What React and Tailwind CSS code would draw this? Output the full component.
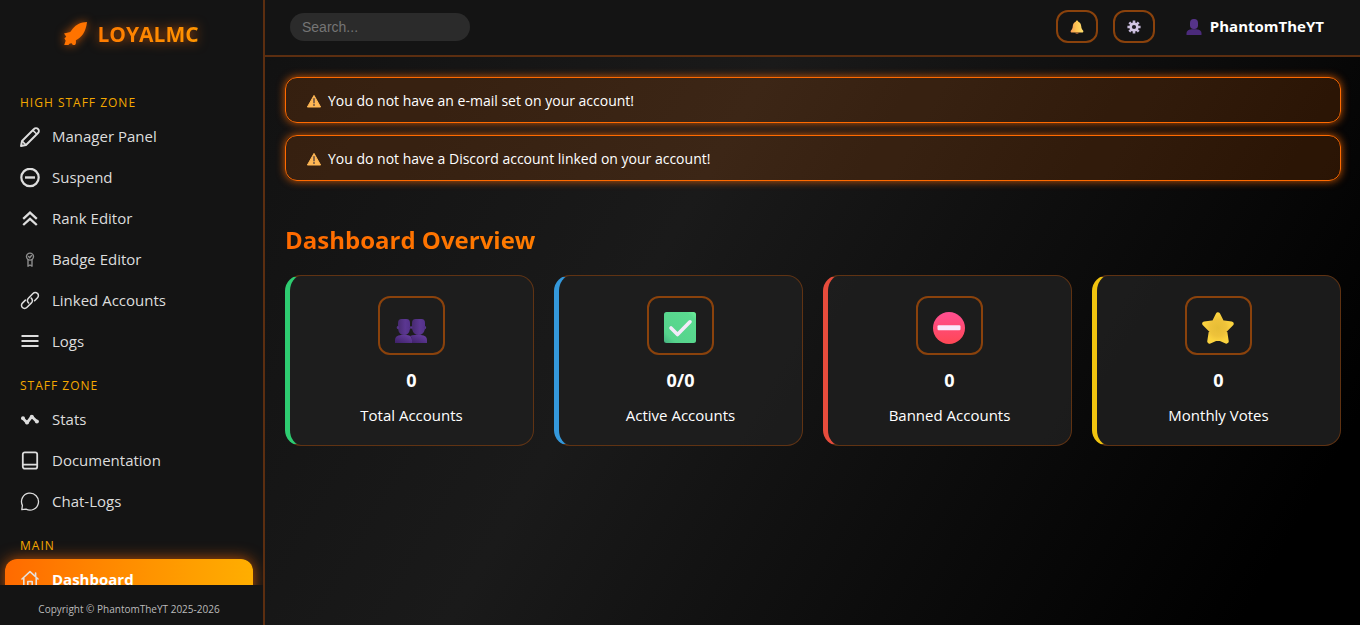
import React from "react";

const line = {
  viewBox: "0 0 20 20",
  fill: "none",
  stroke: "currentColor",
  strokeLinecap: "round",
  strokeLinejoin: "round",
  className: "size-5 shrink-0",
  "aria-hidden": true,
};

const PencilIcon = () => (
  <svg {...line} strokeWidth="1.9">
    <path d="M1 19l1-5L14 2a2.700 2.700 0 0 1 4 0a2.700 2.700 0 0 1 0 4L6 18z" />
    <path d="M13.200 3.600l3.200 3.200M2.600 14.600l2.800 2.800" strokeWidth="1.500" />
  </svg>
);
const SuspendIcon = () => (
  <svg {...line} strokeWidth="2.2">
    <circle cx="10" cy="9.500" r="8.700" />
    <path d="M5 9.500h10" strokeLinecap="butt" strokeWidth="2.400" />
  </svg>
);
const RankIcon = () => (
  <svg {...line} strokeWidth="2.3" strokeLinecap="butt" strokeLinejoin="miter">
    <path d="M3.200 9.800L10 3.600l6.800 6.200M3.200 16L10 9.800l6.800 6.200" />
  </svg>
);
const BadgeIcon = () => (
  <svg {...line} strokeWidth="1.400" opacity="0.6">
    <circle cx="10" cy="6.600" r="3.500" />
    <path d="M8.600 6.600l1.100 1.100 1.800-2.200M8 9.800v6.400l2-1.200 2 1.200V9.800" />
  </svg>
);
const LinkIcon = () => (
  <svg {...line} strokeWidth="1.5">
    <path d="M8.600 11.900C6.900 10.300 7.100 8.500 8.600 6.900L13 2.400a3.100 3.100 0 0 1 4.500 0a3.100 3.100 0 0 1 0 4.400l-2.900 3" />
    <path d="M11.200 7.100c1.700 1.600 1.600 3.500 0 5L6.800 16.500a3.100 3.100 0 0 1-4.400 0a3.100 3.100 0 0 1 0-4.400l3-3" />
  </svg>
);
const LogsIcon = () => (
  <svg {...line} strokeWidth="2" strokeLinecap="butt">
    <path d="M1.500 4h17M1.500 9h17M1.500 14h17" />
  </svg>
);
const StatsIcon = () => (
  <svg {...line} strokeWidth="2.8">
    <path d="M3 8.400L7 12.800 11.700 6.600 16.800 11.600" />
    <g fill="currentColor" stroke="none">
      <circle cx="3" cy="8.200" r="2" />
      <circle cx="7" cy="12.600" r="2" />
      <circle cx="11.800" cy="6.800" r="2" />
      <circle cx="16.900" cy="11.400" r="2" />
    </g>
  </svg>
);
const BookIcon = () => (
  <svg {...line} strokeWidth="1.8">
    <rect x="2.800" y="1.300" width="14.400" height="16.400" rx="2" />
    <path d="M3 13.700h14" />
  </svg>
);
const ChatIcon = () => (
  <svg {...line} strokeWidth="1.3">
    <path d="M1.800 17.600l.6-4.200A8.500 8.500 0 1 1 6 17.100z" />
  </svg>
);
const HomeIcon = () => (
  <svg {...line} strokeWidth="1.6" stroke="#e6e0da">
    <path d="M2 9L10 1.700l8 7.300M3.800 8v9.500h4V11.500h4.400v6h4V8M15.600 6.300V3" />
  </svg>
);

const RocketIcon = () => (
  <svg
    viewBox="0 0 22 22"
    fill="#ff7300"
    className="size-[23px] shrink-0 drop-shadow-[0_0_5px_rgba(255,106,0,0.7)]"
    aria-hidden="true"
  >
    <path d="M22 0C16 .2 12 2 8.300 6.500L6 9.500 0 11 2.200 14.200 .4 15.600 1.600 18 .2 22H4.200L5.600 20.600 7.400 20.400 8.400 22H10.600L11.400 20.400V17.500C17 14.500 21 9.500 22 0z" />
  </svg>
);

const WarningEmoji = () => (
  <svg viewBox="0 0 16 16" className="size-4 shrink-0" aria-hidden="true">
    <path d="M8 2.400L14.600 14H1.400z" fill="#ffb754" stroke="#ffb754" strokeWidth="1" strokeLinejoin="round" />
    <path d="M8 5.800v4" stroke="#5f4a45" strokeWidth="1.500" strokeLinecap="round" />
    <circle cx="8" cy="12" r=".9" fill="#5f4a45" />
  </svg>
);
const BellEmoji = () => (
  <svg viewBox="0 0 14 14" className="size-3.5" aria-hidden="true">
    <defs>
      <linearGradient id="bell" x1="0" x2="1">
        <stop offset="0" stopColor="#f79a55" />
        <stop offset=".45" stopColor="#ffc552" />
        <stop offset="1" stopColor="#ffdf70" />
      </linearGradient>
    </defs>
    <path d="M7 .6a1.400 1.400 0 0 1 1.300 1.200C10.300 2.600 11 4.200 11.200 6c.2 2.200.6 3.200 1.800 4.400.6.700.4 2-.4 2H1.400c-.8 0-1-1.300-.4-2C2.200 9.200 2.600 8.200 2.800 6c.2-1.800.9-3.400 2.900-4.200A1.400 1.400 0 0 1 7 .6z" fill="url(#bell)" />
    <path d="M5.200 12.400h3.600a1.800 1.400 0 0 1-3.600 0z" fill="#c8743a" />
  </svg>
);
const GearEmoji = () => (
  <svg viewBox="0 0 14 14" className="size-3.5" aria-hidden="true">
    <g stroke="#c5b8d9" strokeWidth="2.600">
      <path d="M7 .4v13.200M.4 7h13.200M2.300 2.300l9.400 9.400M11.700 2.300l-9.400 9.400" />
    </g>
    <circle cx="7" cy="7" r="4.600" fill="#d4c8e4" />
    <circle cx="7" cy="7" r="2.100" fill="#1d1a22" />
  </svg>
);
const PersonEmoji = () => (
  <svg viewBox="0 0 16 16" className="size-4 shrink-0" aria-hidden="true">
    <rect x="4" y="0" width="8" height="10" rx="3.800" fill="#56338a" />
    <path d="M.5 16v-1.500C.5 11.500 3 10.600 5.500 10.300h5c2.500.3 5 1.200 5 4.200V16z" fill="#4b2a7b" />
  </svg>
);
const PeopleEmoji = () => (
  <svg viewBox="0 0 32 32" className="size-8" aria-hidden="true">
    <defs>
      <linearGradient id="head" x1="0" x2="1">
        <stop offset="0" stopColor="#472a70" />
        <stop offset=".6" stopColor="#5b3791" />
        <stop offset="1" stopColor="#54318a" />
      </linearGradient>
      <linearGradient id="torso" x1="0" x2="1" y1="1" y2="0">
        <stop offset="0" stopColor="#3d2066" />
        <stop offset="1" stopColor="#6a41a5" />
      </linearGradient>
    </defs>
    <g fill="url(#head)">
      <path d="M3 11q0-4 3.500-4h5q3.500 0 3.500 4v6q-1 6-6 6t-6-6z" />
      <path d="M17 11q0-4 3.500-4h6q3.500 0 3.500 4v6q-1.500 6-6.500 6t-6.500-6z" />
      <ellipse cx="2.800" cy="15.500" rx="1.100" ry="1.500" />
      <ellipse cx="16" cy="15.500" rx="1.400" ry="1.300" />
      <ellipse cx="30" cy="15.500" rx="1.100" ry="1.500" />
    </g>
    <path d="M0 31v-3q0-4.500 6-5h6q5 .5 5 5v3z" fill="url(#torso)" />
    <path d="M17 31v-3q0-3-2-4 2-1 5-1h6q6 .5 6 5v3z" fill="url(#torso)" />
  </svg>
);
const CheckEmoji = () => (
  <svg viewBox="0 0 32 32" className="size-8" aria-hidden="true">
    <defs>
      <linearGradient id="tick" x1="0" x2="1" y1="1" y2="0">
        <stop offset="0" stopColor="#45b080" />
        <stop offset=".2" stopColor="#56d38c" />
        <stop offset=".85" stopColor="#5adb90" />
        <stop offset="1" stopColor="#6df29a" />
      </linearGradient>
    </defs>
    <rect x="0" y="0" width="32" height="31" rx="2.500" fill="url(#tick)" />
    <path d="M7 16l6.500 6.500L26 9.800" fill="none" stroke="#f3eafa" strokeWidth="3.600" strokeLinecap="round" strokeLinejoin="round" />
  </svg>
);
const NoEntryEmoji = () => (
  <svg viewBox="0 0 32 32" className="size-8" aria-hidden="true">
    <defs>
      <linearGradient id="stop" x1="0" x2="0" y1="0" y2="1">
        <stop offset="0" stopColor="#ff4f92" />
        <stop offset="1" stopColor="#ff4754" />
      </linearGradient>
    </defs>
    <circle cx="16" cy="16" r="16" fill="url(#stop)" />
    <rect x="4.500" y="13.300" width="23" height="5" rx="1.200" fill="#f8e8fb" />
  </svg>
);
const StarEmoji = () => (
  <svg viewBox="0 0 32 32" className="size-8" aria-hidden="true">
    <defs>
      <radialGradient id="star">
        <stop offset="0" stopColor="#e6bd35" />
        <stop offset=".6" stopColor="#eec23a" />
        <stop offset="1" stopColor="#fbd33f" />
      </radialGradient>
    </defs>
    <path d="M16 2.500l4 8 9.500 1.200-6.700 6.700 1.700 11L16 25.600 7.500 29.400l1.700-11L2.500 11.700 12 10.500z" fill="url(#star)" stroke="url(#star)" strokeWidth="4.500" strokeLinejoin="round" />
  </svg>
);

const sections = [
  {
    title: "High Staff Zone",
    items: [
      ["Manager Panel", PencilIcon],
      ["Suspend", SuspendIcon],
      ["Rank Editor", RankIcon],
      ["Badge Editor", BadgeIcon],
      ["Linked Accounts", LinkIcon],
      ["Logs", LogsIcon],
    ],
  },
  {
    title: "Staff Zone",
    items: [
      ["Stats", StatsIcon],
      ["Documentation", BookIcon],
      ["Chat-Logs", ChatIcon],
    ],
  },
  { title: "Main", items: [["Dashboard", HomeIcon, true]] },
];

const alerts = [
  "You do not have an e-mail set on your account!",
  "You do not have a Discord account linked on your account!",
];

const cards = [
  { label: "Total Accounts", value: "0", Icon: PeopleEmoji, accent: "border-l-[#2ecc71]" },
  { label: "Active Accounts", value: "0/0", Icon: CheckEmoji, accent: "border-l-[#3498db]" },
  { label: "Banned Accounts", value: "0", Icon: NoEntryEmoji, accent: "border-l-[#e74c3c]" },
  { label: "Monthly Votes", value: "0", Icon: StarEmoji, accent: "border-l-[#f1c40f]" },
];

function Sidebar() {
  return (
    <aside className="sticky top-0 flex h-screen w-[265px] shrink-0 flex-col border-r-2 border-[#5c2e10] bg-[#141414]">
      <div className="flex h-[67px] shrink-0 items-center justify-center gap-2.5">
        <RocketIcon />
        <span className="bg-linear-to-r from-[#ff7b00] to-[#ff9500] bg-clip-text text-[21px] leading-8 font-bold text-transparent drop-shadow-[0_0_6px_rgba(255,106,0,0.7)]">
          LOYALMC
        </span>
      </div>
      <nav className="min-h-0 flex-1 overflow-y-auto pt-3 [scrollbar-width:none]">
        {sections.map(({ title, items }) => (
          <section key={title}>
            <h2 className="px-5 pt-[15px] pb-1 text-xs leading-[18px] tracking-[1px] text-[#f5a800] uppercase">
              {title}
            </h2>
            <ul className="pr-2.5 pl-[5px]">
              {items.map(([label, Icon, active]) => (
                <li key={label}>
                  <a
                    href="#"
                    className={
                      active
                        ? "flex h-[41px] items-center gap-3 rounded-xl bg-linear-to-r from-[#ff6a00] to-[#ffae00] px-[15px] text-[15px] font-bold text-white shadow-[0_0_15px_rgba(255,106,0,0.7)]"
                        : "flex h-[41px] items-center gap-3 rounded-xl px-[15px] text-[15px] text-[#dddddd]"
                    }
                  >
                    <Icon />
                    {label}
                  </a>
                </li>
              ))}
            </ul>
          </section>
        ))}
      </nav>
      <footer className="flex h-10 shrink-0 items-center justify-center bg-[#141414] pt-2 pr-[5px] text-[10px] text-[#bbbbbb]">
        Copyright © PhantomTheYT 2025-2026
      </footer>
    </aside>
  );
}

function Header() {
  return (
    <header className="flex items-center justify-between border-b-2 border-[#5c2e10] bg-[#141414] pt-2.5 pr-9 pb-3 pl-[25px]">
      <input
        type="search"
        aria-label="Search"
        placeholder="Search..."
        className="h-7 w-[180px] rounded-[14px] bg-[#2b2b2b] px-3 font-['Liberation_Sans',sans-serif] text-sm text-white outline-none placeholder:text-[#757575]"
      />
      <div className="flex items-center gap-[15px]">
        <button type="button" aria-label="Notifications" className="flex h-[33px] w-[42px] items-center justify-center rounded-xl border-2 border-[#8a420c]">
          <BellEmoji />
        </button>
        <button type="button" aria-label="Settings" className="flex h-[33px] w-[42px] items-center justify-center rounded-xl border-2 border-[#8a420c]">
          <GearEmoji />
        </button>
        <a href="#" className="flex items-center gap-2 pl-4 text-[15px] font-bold text-white">
          <PersonEmoji />
          PhantomTheYT
        </a>
      </div>
    </header>
  );
}

export default function App() {
  return (
    <div className="flex min-h-screen bg-[linear-gradient(120deg,#0d0d0d_0%,#1a1a1a_47%,#000_93%)] font-['Open_Sans','Noto_Sans',sans-serif] text-white">
      <Sidebar />
      <div className="min-w-0 flex-1">
        <Header />
        <main className="py-5 pr-[19px] pl-5">
          <div className="flex flex-col gap-3">
            {alerts.map((text) => (
              <p
                key={text}
                role="alert"
                className="flex h-[46px] items-center gap-1.5 rounded-xl border border-[#ff6a00] bg-[#ff6a00]/15 px-5 pt-0.5 text-sm shadow-[0_0_8px_rgba(255,106,0,0.8)]"
              >
                <WarningEmoji />
                {text}
              </p>
            ))}
          </div>
          <h1 className="mt-10 bg-linear-to-r from-[#ff6a00] to-[#ffae00] bg-clip-text text-2xl leading-[38px] font-bold text-transparent">
            Dashboard Overview
          </h1>
          <div className="mt-4 grid grid-cols-4 gap-5">
            {cards.map(({ label, value, Icon, accent }) => (
              <section
                key={label}
                className={`flex flex-col items-center rounded-2xl border border-l-[5px] border-y-[#ff6a00]/30 border-r-[#ff6a00]/30 bg-[#1e1e1e]/90 pt-5 pb-[18px] text-center ${accent}`}
              >
                <div className="flex h-[59px] w-[67px] items-center justify-center rounded-xl border-2 border-[#8a420c] pt-1 pr-px">
                  <Icon />
                </div>
                <p className="mt-3 text-lg leading-[26px] font-bold">{value}</p>
                <p className="mt-2.5 text-[15px] leading-6">{label}</p>
              </section>
            ))}
          </div>
        </main>
      </div>
    </div>
  );
}
